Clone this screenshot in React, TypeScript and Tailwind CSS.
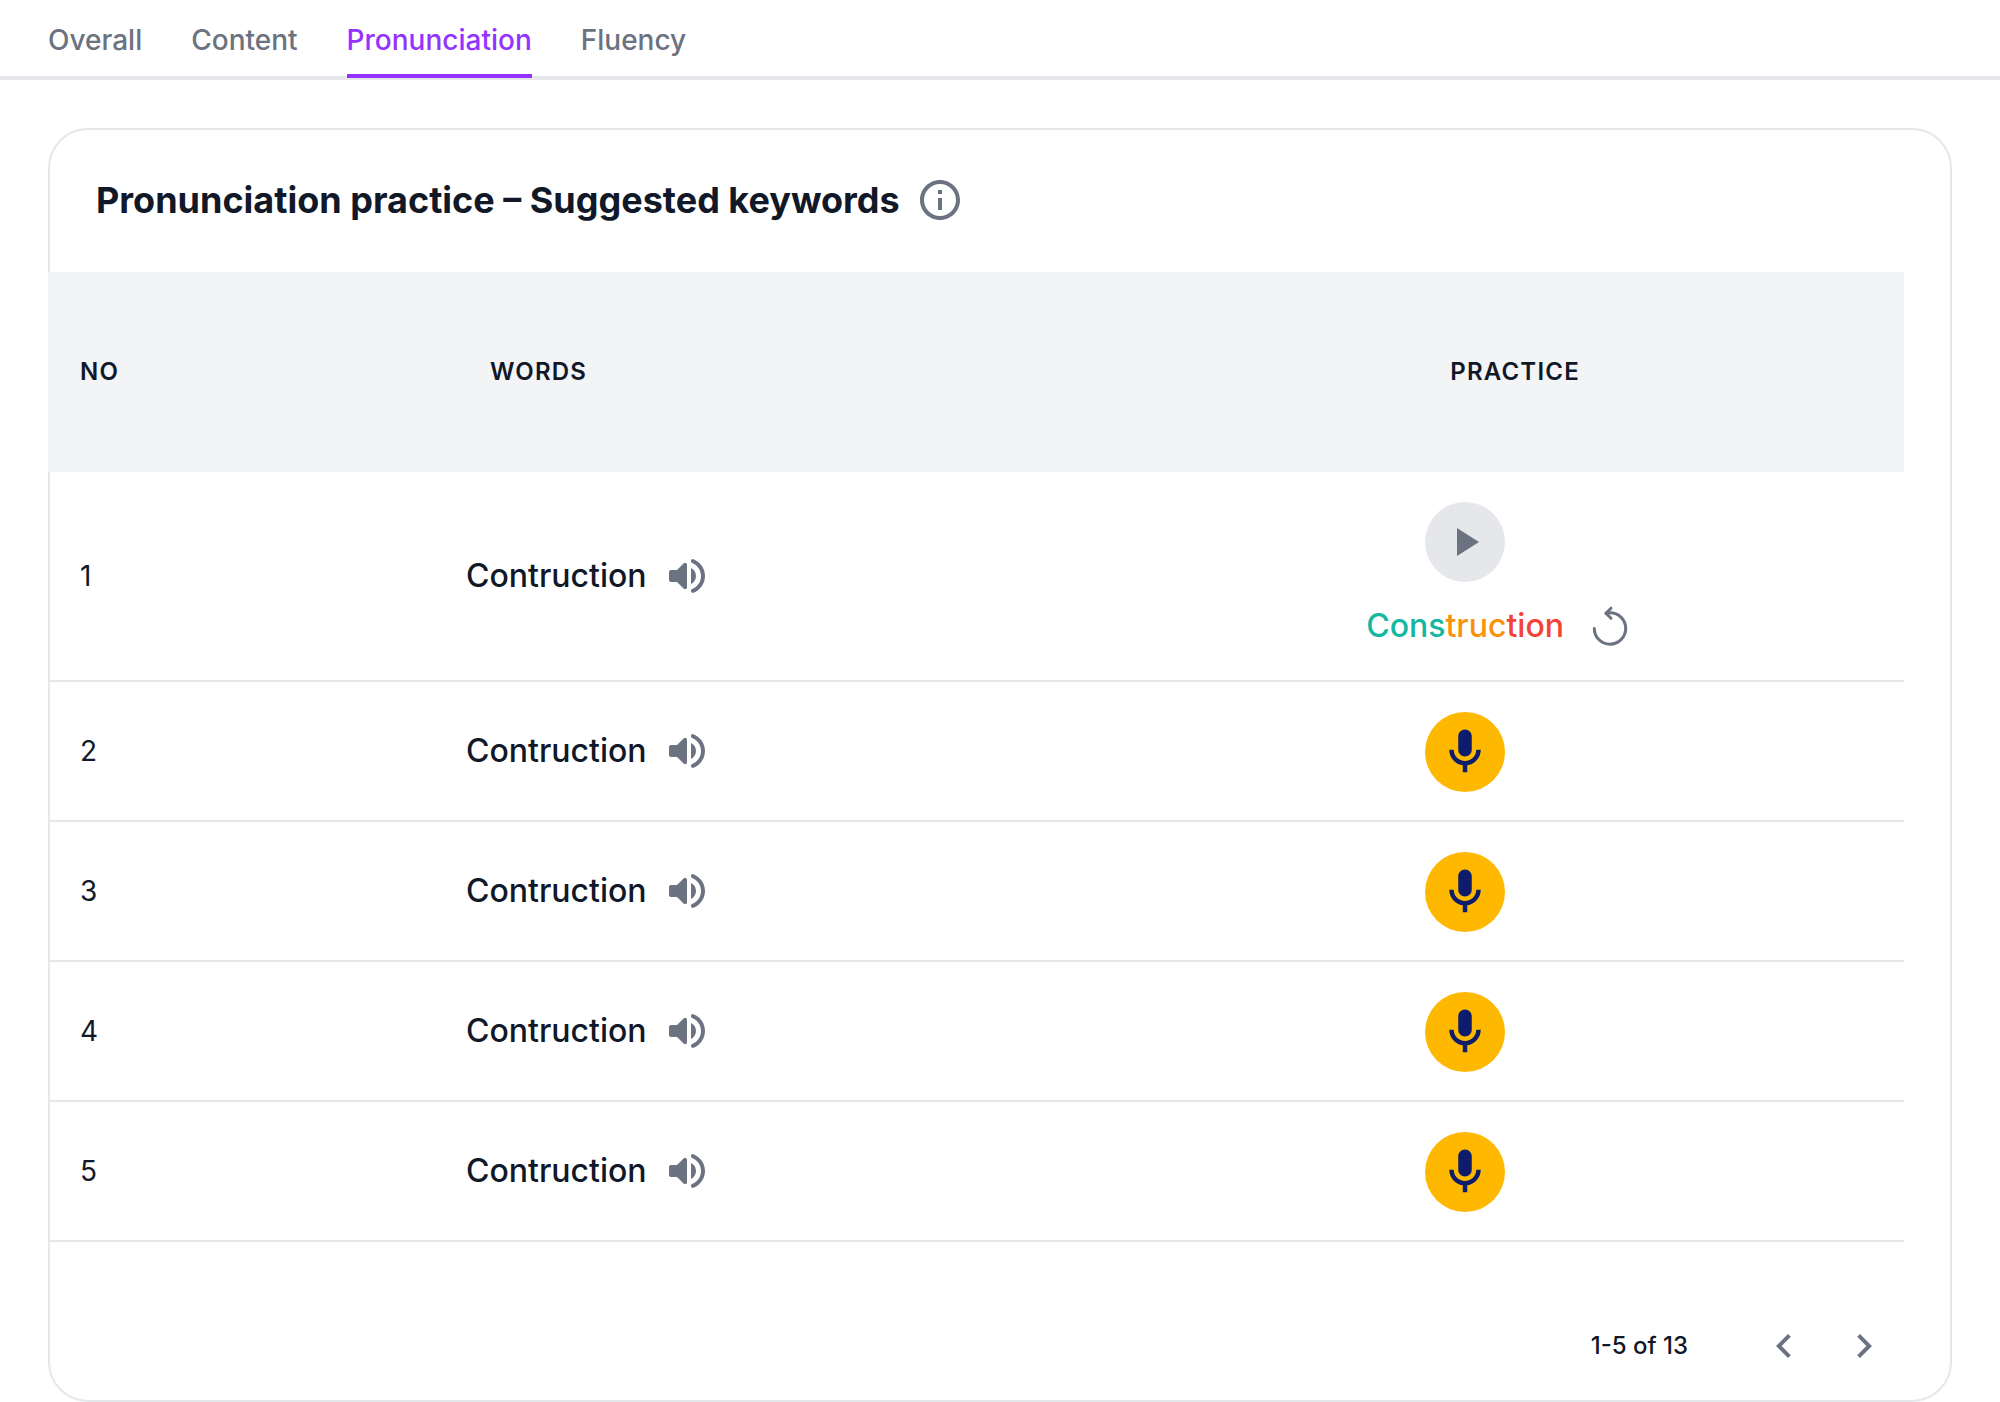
import { useState } from 'react'
import type { ReactNode } from 'react'

type Part = { text: string; className: string }

type Word = {
  no: number
  word: string
  result?: Part[]
}

const tabs = ['Overall', 'Content', 'Pronunciation', 'Fluency']

const words: Word[] = [
  {
    no: 1,
    word: 'Contruction',
    result: [
      { text: 'Cons', className: 'text-[#14b8a0]' },
      { text: 'truc', className: 'text-[#f9920b]' },
      { text: 'tion', className: 'text-[#f44336]' },
    ],
  },
  { no: 2, word: 'Contruction' },
  { no: 3, word: 'Contruction' },
  { no: 4, word: 'Contruction' },
  { no: 5, word: 'Contruction' },
]

function Icon({ className, children }: { className: string; children: ReactNode }) {
  return (
    <svg viewBox="0 0 24 24" fill="currentColor" aria-hidden="true" className={className}>
      {children}
    </svg>
  )
}

function InfoIcon() {
  return (
    <Icon className="size-12">
      <path d="M11 7h2v2h-2zm0 4h2v6h-2zm1-9C6.48 2 2 6.48 2 12s4.48 10 10 10 10-4.48 10-10S17.52 2 12 2zm0 18c-4.41 0-8-3.59-8-8s3.59-8 8-8 8 3.59 8 8-3.59 8-8 8z" />
    </Icon>
  )
}

function VolumeIcon() {
  return (
    <Icon className="size-12">
      <path d="M3 10v4c0 .55.45 1 1 1h3l3.29 3.29c.63.63 1.71.18 1.71-.71V6.41c0-.89-1.08-1.34-1.71-.71L7 9H4c-.55 0-1 .45-1 1zm13.5 2A4.5 4.5 0 0 0 14 7.97v8.05c1.48-.73 2.5-2.25 2.5-4.02zM14 4.45v.2c0 .38.25.71.6.85C17.18 6.53 19 9.06 19 12s-1.82 5.47-4.4 6.5c-.36.14-.6.47-.6.85v.2c0 .63.63 1.07 1.21.85C18.6 19.11 21 15.84 21 12s-2.4-7.11-5.79-8.4c-.58-.23-1.21.22-1.21.85z" />
    </Icon>
  )
}

function PlayIcon() {
  return (
    <Icon className="size-12">
      <path d="M8 5v14l11-7z" />
    </Icon>
  )
}

function MicIcon() {
  return (
    <Icon className="size-[54px]">
      <path d="M12 14c1.66 0 3-1.34 3-3V5c0-1.66-1.34-3-3-3S9 3.34 9 5v6c0 1.66 1.34 3 3 3zm5-3c0 2.76-2.24 5-5 5s-5-2.24-5-5H5c0 3.53 2.61 6.43 6 6.92V21h2v-3.08c3.39-.49 6-3.39 6-6.92h-2z" />
    </Icon>
  )
}

function RetryIcon() {
  return (
    <svg
      viewBox="0 0 48 48"
      fill="none"
      stroke="currentColor"
      strokeWidth="3"
      strokeLinecap="round"
      strokeLinejoin="round"
      aria-hidden="true"
      className="size-12"
    >
      <path d="M8.3 26.4a15.7 15.7 0 1 0 15.7-15.6q-1.9 0-4 .5" />
      <path d="M25 6.2 20 11.3l5 5" />
    </svg>
  )
}

function WordRow({ item }: { item: Word }) {
  return (
    <tr>
      <td className="border-b-2 border-gray-200 pl-8 text-[28px] leading-12">{item.no}</td>
      <td className="border-b-2 border-gray-200 pl-8">
        <div className="flex items-center gap-4 text-[32px] leading-12 font-medium">
          {item.word}
          <button type="button" aria-label={`Listen to ${item.word}`} className="text-[#6b7280]">
            <VolumeIcon />
          </button>
        </div>
      </td>
      <td className="border-b-2 border-gray-200 pt-[30px] pb-7">
        {item.result ? (
          <div className="flex flex-col items-center gap-5">
            <button
              type="button"
              aria-label="Play recording"
              className="flex size-20 items-center justify-center rounded-full bg-gray-200 text-[#6b7280]"
            >
              <PlayIcon />
            </button>
            <div className="mb-0.5 grid w-full grid-cols-[1fr_auto_1fr] items-center gap-[22px]">
              <p className="col-start-2 text-[32px] leading-12 font-medium">
                {item.result.map((part) => (
                  <span key={part.text} className={part.className}>
                    {part.text}
                  </span>
                ))}
              </p>
              <button type="button" aria-label="Try again" className="justify-self-start text-[#6b7280]">
                <RetryIcon />
              </button>
            </div>
          </div>
        ) : (
          <button
            type="button"
            aria-label={`Record ${item.word}`}
            className="mx-auto flex size-20 items-center justify-center rounded-full bg-[#ffb800] text-[#0d1c6b]"
          >
            <MicIcon />
          </button>
        )}
      </td>
    </tr>
  )
}

export default function App() {
  const [active, setActive] = useState('Pronunciation')

  return (
    <div className="bg-white font-['Inter',sans-serif] text-[#111827]">
      <nav className="flex h-20 gap-[49px] border-b-4 border-gray-200 px-12">
        {tabs.map((tab) => (
          <button
            key={tab}
            type="button"
            onClick={() => setActive(tab)}
            className={
              'h-[78px] border-b-4 pt-1.5 text-[28px] leading-10 font-medium ' +
              (tab === active
                ? 'border-[#9333ff] text-[#9333ff]'
                : 'border-transparent text-[#6b7280]')
            }
          >
            {tab}
          </button>
        ))}
      </nav>

      <main className="px-12 pt-12">
        <section className="rounded-[40px] border-2 border-gray-200">
          <div className="flex items-center gap-4 pt-[46px] pb-12 pl-[46px]">
            <h1 className="text-[36px] leading-12 font-bold">
              Pronunciation practice – Suggested keywords
            </h1>
            <button type="button" aria-label="About suggested keywords" className="text-[#6b7280]">
              <InfoIcon />
            </button>
          </div>

          <div className="-ml-0.5 pr-[46px]">
            <table className="w-full table-fixed border-separate border-spacing-0">
              <thead>
                <tr className="h-[200px] bg-gray-100 text-2xl tracking-wider uppercase">
                  <th scope="col" className="w-[20.8%] pl-8 text-left font-semibold">
                    No
                  </th>
                  <th scope="col" className="w-[31.9%] pl-14 text-left font-semibold">
                    Words
                  </th>
                  <th scope="col" className="pl-25 text-center font-semibold">
                    Practice
                  </th>
                </tr>
              </thead>
              <tbody>
                {words.map((item) => (
                  <WordRow key={item.no} item={item} />
                ))}
              </tbody>
            </table>
          </div>

          <div className="flex items-center justify-end gap-8 pt-20 pr-[62px] pb-[30px]">
            <span className="mr-10 text-2xl font-medium">1-5 of 13</span>
            <button type="button" aria-label="Previous page" className="text-[#6b7280]">
              <Icon className="size-12">
                <path d="M15.41 7.41 14 6l-6 6 6 6 1.41-1.41L10.83 12z" />
              </Icon>
            </button>
            <button type="button" aria-label="Next page" className="text-[#6b7280]">
              <Icon className="size-12">
                <path d="M10 6 8.59 7.41 13.17 12l-4.58 4.59L10 18l6-6z" />
              </Icon>
            </button>
          </div>
        </section>
      </main>
    </div>
  )
}
